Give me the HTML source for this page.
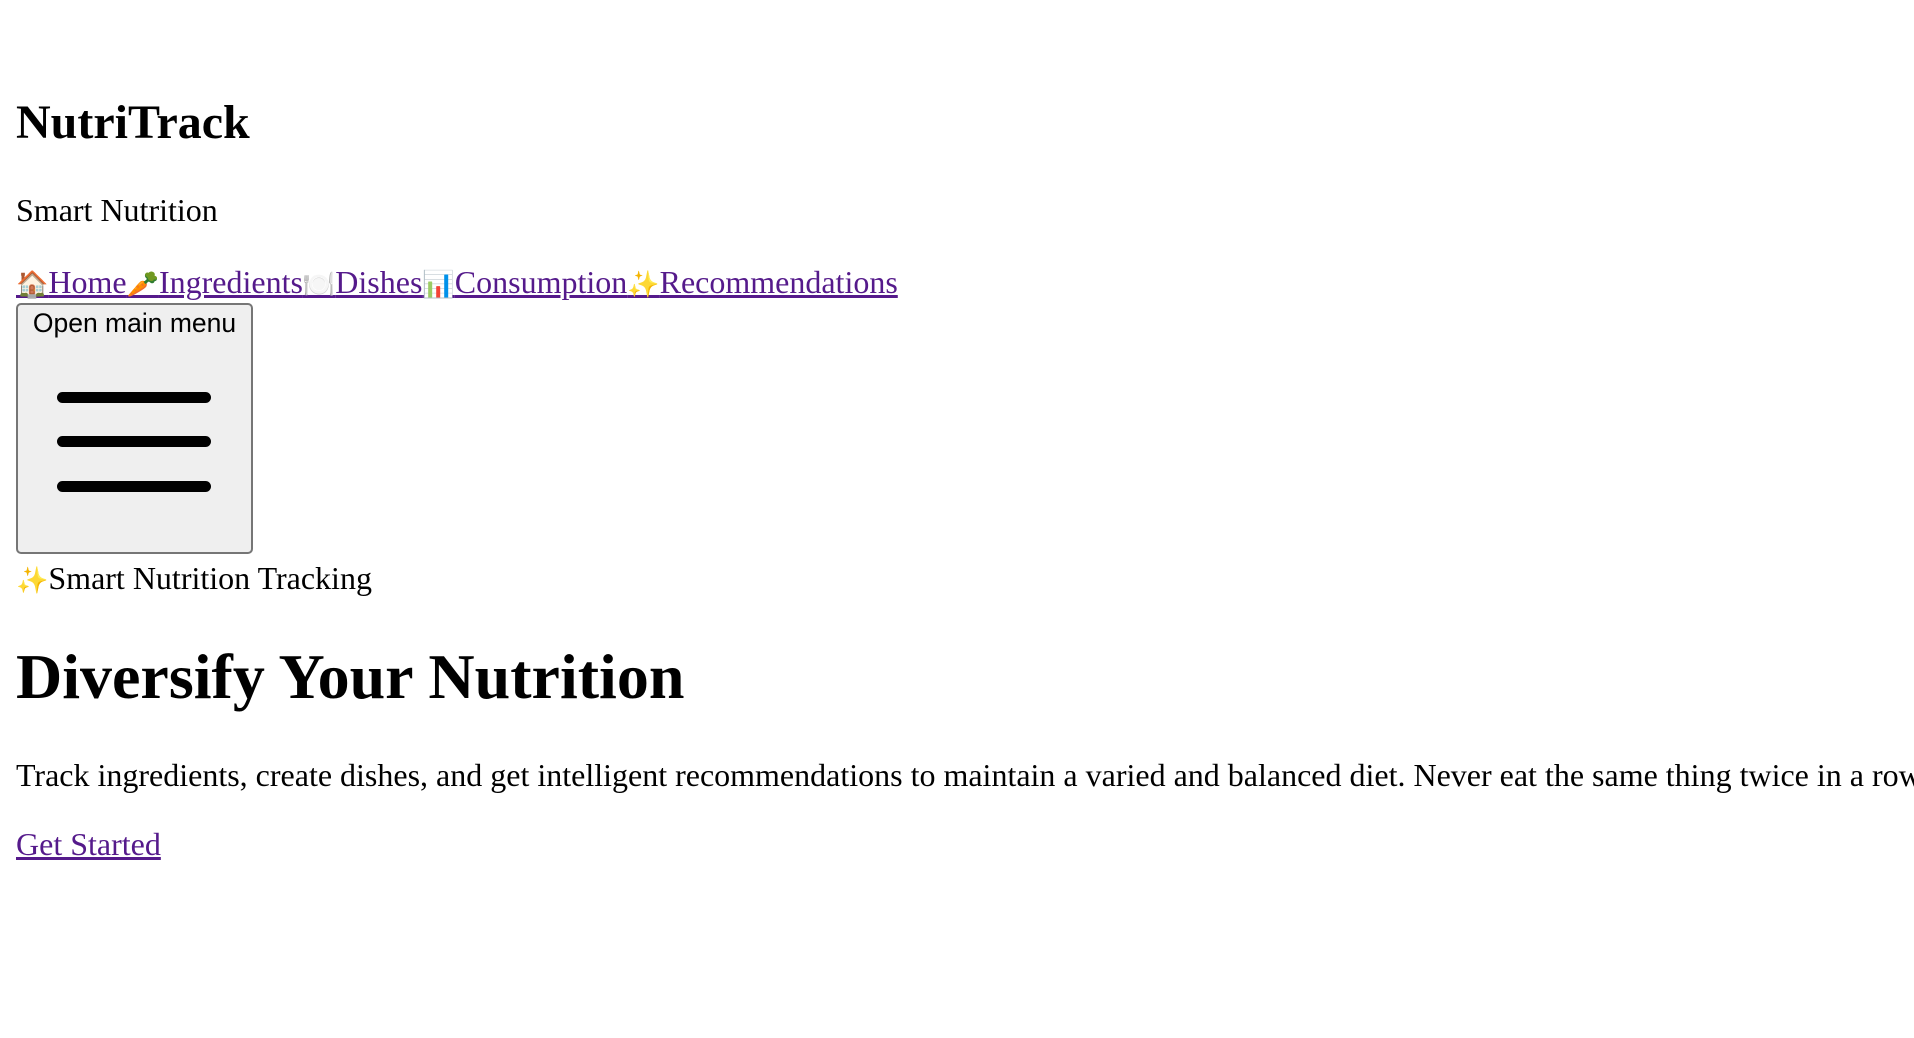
<!DOCTYPE html>
<html><head><meta charset="utf-8"><style>
html,body{margin:0;padding:0;background:#fff;width:1914px;height:1038px;overflow:hidden;}
body{font-family:"Liberation Serif","Times New Roman",serif;color:#000;position:relative;}
.a{position:absolute;left:16px;white-space:nowrap;line-height:normal;}
a{color:#551a8b;text-decoration:underline;}
.e{font-size:26px;}
.btn{position:absolute;left:16px;top:303px;width:237px;height:251px;box-sizing:border-box;background:#efefef;border:2px solid #767676;border-radius:5px;}
.btn .t{position:absolute;top:3px;left:0;right:0;text-align:center;font-family:"Liberation Sans",Arial,sans-serif;font-size:26.5px;}
.bar{position:absolute;left:39px;width:154px;height:11px;background:#000;border-radius:6px;}
</style></head><body>
<div class="a" style="top:95px;font-size:48px;font-weight:bold;">NutriTrack</div>
<div class="a" style="top:192px;font-size:32px;">Smart Nutrition</div>
<div class="a" style="top:264px;font-size:32px;"><a><span class="e">🏠</span>Home</a><a><span class="e">🥕</span>Ingredients</a><a><span class="e">🍽️</span>Dishes</a><a><span class="e">📊</span>Consumption</a><a><span class="e">✨</span>Recommendations</a></div>
<div class="btn"><div class="t">Open main menu</div>
<div class="bar" style="top:87px"></div>
<div class="bar" style="top:131px"></div>
<div class="bar" style="top:176px"></div>
</div>
<div class="a" style="top:560px;font-size:32px;"><span class="e">✨</span>Smart Nutrition Tracking</div>
<div class="a" style="top:640px;font-size:64px;font-weight:bold;">Diversify Your Nutrition</div>
<div class="a" style="top:757px;font-size:32px;">Track ingredients, create dishes, and get intelligent recommendations to maintain a varied and balanced diet. Never eat the same thing twice in a row!</div>
<div class="a" style="top:826px;font-size:32px;"><a>Get Started</a></div>
</body></html>
